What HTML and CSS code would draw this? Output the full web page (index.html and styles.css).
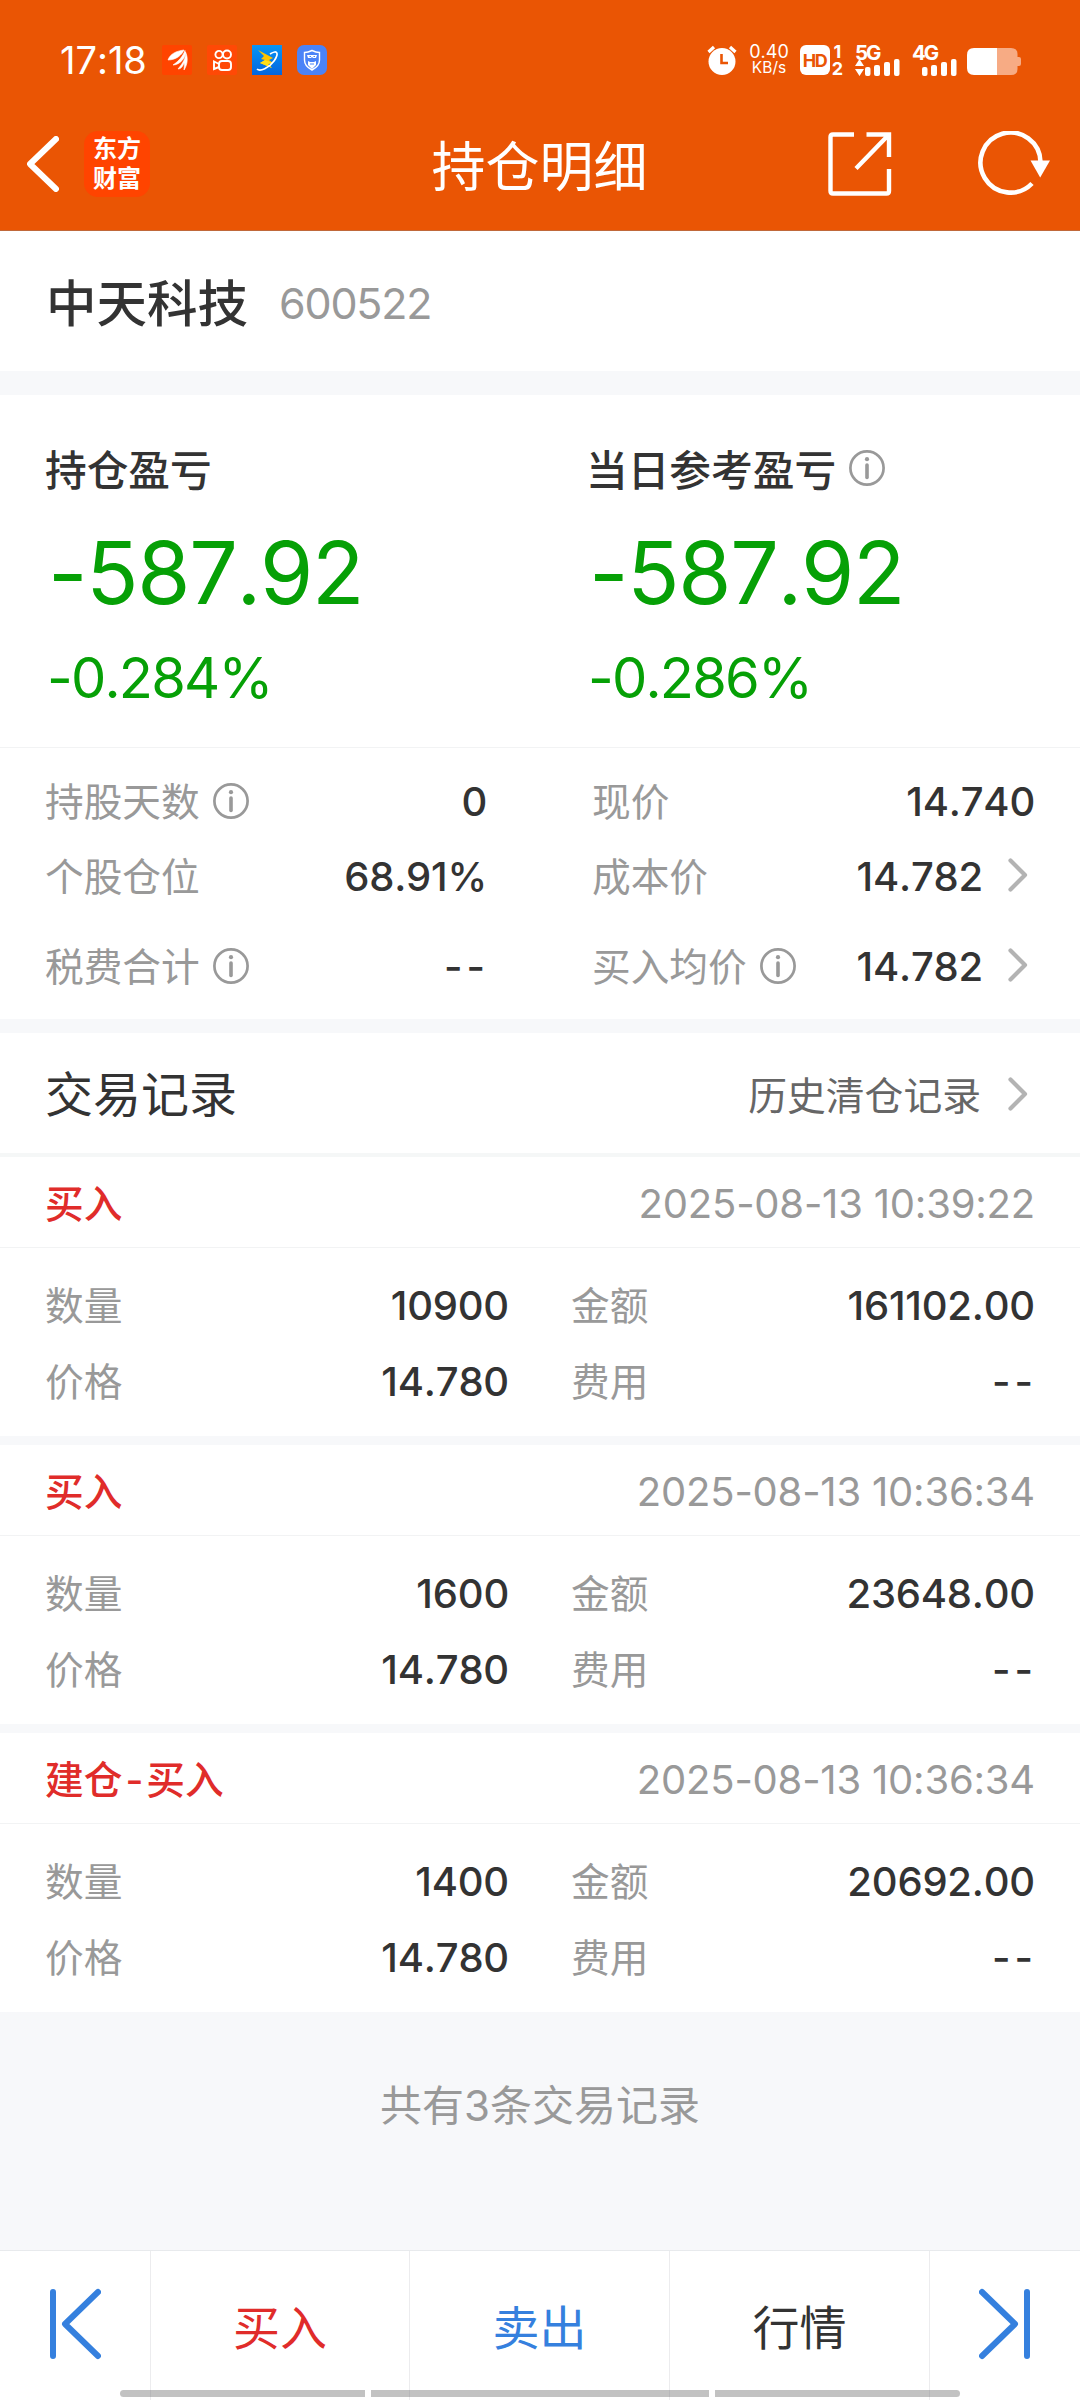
FILE: index.html
```html
<!DOCTYPE html>
<html lang="zh-CN">
<head>
<meta charset="utf-8">
<title>持仓明细</title>
<link rel="stylesheet" href="styles.css">
</head>
<body>
<svg class="defs" width="0" height="0">
  <symbol id="info" viewBox="0 0 36 36"><circle cx="18" cy="18" r="16.6" fill="none" stroke="currentColor" stroke-width="2.700"/><circle cx="18" cy="9.2" r="2.1" fill="currentColor"/><path d="M18 15V27.500" stroke="currentColor" stroke-width="3.6" stroke-linecap="round"/></symbol>
  <symbol id="chev" viewBox="0 0 20 34"><path d="M2.500 2.500L17 17L2.500 31.500" fill="none" stroke="currentColor" stroke-width="4.200" stroke-linecap="round" stroke-linejoin="round"/></symbol>
</svg>
<header class="header">
  <div class="status">
    <span class="time">17:18</span>
    <svg class="app" viewBox="0 0 30 30"><rect width="30" height="30" rx="2" fill="#ff4400"/><path d="M6 15C8 9 14 6 22 5C20 10 14 15 6 15ZM11 20C17 16 21 11 23 5.500C25 12 18 20 11 20ZM16 24C21 18 24 13 23.500 7C26 12 26 19 22 25C22 22 23 19 22 18C21 21 19 24 16 24Z" fill="#fff" stroke="#fff" stroke-width=".6"/></svg>
    <svg class="app" viewBox="0 0 30 30"><rect width="30" height="30" rx="2" fill="#ff4906"/><g fill="none" stroke="#fff" stroke-width="1.900"><circle cx="12" cy="9.500" r="3.600"/><circle cx="20" cy="9.500" r="4"/><rect x="12" y="16" width="12" height="9" rx="3"/><path d="M12 19L7 16.500V24L12 22"/></g></svg>
    <svg class="app" viewBox="0 0 30 30"><defs><linearGradient id="sky" x2="0" y2="1"><stop stop-color="#0795f5"/><stop offset="1" stop-color="#0465df"/></linearGradient></defs><rect width="30" height="30" fill="url(#sky)"/><path d="M6 5L21 13L17 15L21 18L16 19L20 23L8 18L13 15L9 14L12 11Z" fill="#ffc400"/><path d="M13 15L21 18L16 19L20 23L8 18Z" fill="#ffdf19"/><path d="M18 9C26 4 27 9 22 16C17 23 8 27 5 24" fill="none" stroke="#fff" stroke-width="1.700"/></svg>
    <svg class="app" viewBox="0 0 30 30"><rect width="30" height="30" rx="7" fill="#4b83f7"/><path d="M15 5.500C18 7 20 7.500 22.500 7.500V15C22.500 20 19 23 15 25C11 23 7.500 20 7.500 15V7.500C10 7.500 12 7 15 5.500Z" fill="none" stroke="#fff" stroke-width="1.400"/><path d="M10 10H20L19 13H16L15 12L14 13H11ZM11 16L13 17H17L19 16V20L15 24L11 20Z" fill="#fff"/><path d="M12.500 11.500H14M16.500 11.500H18M13 19H17" stroke="#4b83f7"/></svg>
    <div class="sysicons">
      <svg class="alarm" viewBox="0 0 30 30"><circle cx="15" cy="16.500" r="13.500" fill="#fff"/><path d="M1.500 7L7 2M28.500 7L23 2" stroke="#fff" stroke-width="3.200"/><path d="M14.500 9V18H21" fill="none" stroke="#ea5504" stroke-width="2.600"/></svg>
      <div class="speed"><span class="speed-n">0.40</span><span class="speed-u">KB/s</span></div>
      <div class="hd">HD</div>
      <div class="sims"><span>1</span><span>2</span></div>
      <div class="net net5"><span>5G</span><svg viewBox="0 0 45 17"><path d="M0 7L4.500 0L9 7ZM0 10L4.500 17L9 10Z" fill="#fff"/><g fill="#fff"><rect x="10" y="8" width="5.500" height="9" rx="2"/><rect x="19" y="6" width="6" height="11" rx="2"/><rect x="29" y="3" width="6" height="14" rx="2"/><rect x="39" y="0" width="5.500" height="17" rx="2"/></g></svg></div>
      <div class="net net4"><span>4G</span><svg viewBox="0 0 45 17"><g fill="#fff"><rect x="10" y="8" width="5.500" height="9" rx="2"/><rect x="19" y="6" width="6" height="11" rx="2"/><rect x="29" y="3" width="6" height="14" rx="2"/><rect x="39" y="0" width="5.500" height="17" rx="2"/></g></svg></div>
      <svg class="battery" viewBox="0 0 54 27"><path d="M30 0H44Q50.500 0 50.500 6V9H52Q54 9 54 11V16Q54 18 52 18H50.500V21Q50.500 27 44 27H30Z" fill="#f7ab84"/><path d="M30 0H7Q0 0 0 7V20Q0 27 7 27H30Z" fill="#fff"/></svg>
    </div>
  </div>
  <nav class="nav">
    <div class="nav-left">
      <svg class="back" viewBox="0 0 32 56"><path d="M29 3L3 28L29 53" fill="none" stroke="#fff" stroke-width="6" stroke-linecap="round" stroke-linejoin="round"/></svg>
      <div class="brand">东方<br>财富</div>
    </div>
    <h1 class="title">持仓明细</h1>
    <div class="nav-right">
      <svg class="share" viewBox="0 0 64 64"><path d="M26 2.500H5Q2.500 2.500 2.500 5V59Q2.500 61.500 5 61.500H58.500Q61 61.500 61 59V37M38.500 2.500H61V25M61 2.500L28 36.500" fill="none" stroke="#fff" stroke-width="4.400"/></svg>
      <svg class="reload" viewBox="0 0 72 66"><path d="M53 52.500A30 30 0 1 1 61.500 31" fill="none" stroke="#fff" stroke-width="4.600"/><path d="M51.500 29.500H71L61.200 46.500Z" fill="#fff"/></svg>
    </div>
  </nav>
</header>
<main class="content">
  <section class="stock"><span class="name">中天科技</span><span class="code">600522</span></section>
  <section class="profit">
    <div class="pcol"><div class="plabel">持仓盈亏</div><div class="pbig">-587.92</div><div class="ppct">-0.284%</div></div>
    <div class="pcol"><div class="plabel">当日参考盈亏<svg class="info"><use href="#info"/></svg></div><div class="pbig">-587.92</div><div class="ppct">-0.286%</div></div>
  </section>
  <section class="stats">
    <div class="scol">
      <div class="row"><span class="label">持股天数</span><svg class="info"><use href="#info"/></svg><span class="val">0</span></div>
      <div class="row"><span class="label">个股仓位</span><span class="val">68.91%</span></div>
      <div class="row last"><span class="label">税费合计</span><svg class="info"><use href="#info"/></svg><span class="val none">--</span></div>
    </div>
    <div class="scol right">
      <div class="row"><span class="label">现价</span><span class="val">14.740</span></div>
      <div class="row"><span class="label">成本价</span><span class="val">14.782</span><svg class="chev"><use href="#chev"/></svg></div>
      <div class="row last"><span class="label">买入均价</span><svg class="info"><use href="#info"/></svg><span class="val">14.782</span><svg class="chev"><use href="#chev"/></svg></div>
    </div>
  </section>
  <section class="rechead"><h2>交易记录</h2><a class="history">历史清仓记录</a><svg class="chev"><use href="#chev"/></svg></section>
  <section class="records">
    <article class="record">
      <div class="rtop"><span class="side">买入</span><span class="date">2025-08-13 10:39:22</span></div>
      <div class="rbody">
        <div class="cell"><span class="label">数量</span><span class="val">10900</span></div><div class="cell"><span class="label">金额</span><span class="val">161102.00</span></div>
        <div class="cell"><span class="label">价格</span><span class="val">14.780</span></div><div class="cell"><span class="label">费用</span><span class="val none">--</span></div>
      </div>
    </article>
    <article class="record">
      <div class="rtop"><span class="side">买入</span><span class="date">2025-08-13 10:36:34</span></div>
      <div class="rbody">
        <div class="cell"><span class="label">数量</span><span class="val">1600</span></div><div class="cell"><span class="label">金额</span><span class="val">23648.00</span></div>
        <div class="cell"><span class="label">价格</span><span class="val">14.780</span></div><div class="cell"><span class="label">费用</span><span class="val none">--</span></div>
      </div>
    </article>
    <article class="record">
      <div class="rtop"><span class="side">建仓<span class="dash">-</span>买入</span><span class="date">2025-08-13 10:36:34</span></div>
      <div class="rbody">
        <div class="cell"><span class="label">数量</span><span class="val">1400</span></div><div class="cell"><span class="label">金额</span><span class="val">20692.00</span></div>
        <div class="cell"><span class="label">价格</span><span class="val">14.780</span></div><div class="cell"><span class="label">费用</span><span class="val none">--</span></div>
      </div>
    </article>
  </section>
  <p class="total">共有3条交易记录</p>
</main>
<footer class="tabbar">
  <a class="tab"><svg class="skip" viewBox="0 0 52 72"><path d="M4 4V68M49 4L16 36L49 68" fill="none" stroke="#3580de" stroke-width="6" stroke-linecap="round" stroke-linejoin="round"/></svg></a>
  <a class="tab buy">买入</a>
  <a class="tab sell">卖出</a>
  <a class="tab">行情</a>
  <a class="tab"><svg class="skip" viewBox="0 0 52 72"><path d="M48 4V68M3 4L36 36L3 68" fill="none" stroke="#3580de" stroke-width="6" stroke-linecap="round" stroke-linejoin="round"/></svg></a>
  <div class="gesture"><i></i><i></i><i></i></div>
</footer>
</body>
</html>
```
FILE: styles.css
```css
* { box-sizing: border-box; }
body { margin: 0; width: 1080px; height: 2400px; display: flex; flex-direction: column; background: #f7f8fa; color: #333; font-family: Inter, "Noto Sans CJK SC", sans-serif; font-kerning: none; font-feature-settings: "calt" 0; overflow: hidden; }
h1, h2, p { margin: 0; font-weight: 400; }
svg { display: block; flex: none; }
.defs { position: absolute; }

.header { height: 231px; background: #ea5504; color: #fff; border-bottom: 1px solid #c0683a; flex: none; }
.status { height: 90px; padding: 30px 59px 0 60px; display: flex; align-items: center; }
.time { font-size: 38px; width: 102px; letter-spacing: 0; line-height: 60px; white-space: nowrap; }
.app { width: 30px; height: 30px; margin-right: 15px; }
.sysicons { margin-left: auto; display: flex; align-items: center; height: 30px; }
.alarm { width: 30px; height: 30px; margin-right: 12px; }
.speed { width: 40px; display: flex; flex-direction: column; align-items: center; line-height: 16px; margin-right: 11px; }
.speed-n { font-size: 18px; }
.speed-u { font-size: 15.500px; }
.hd { width: 30px; height: 30px; border-radius: 6px; background: #fff; color: #ea5504; font-size: 18px; font-weight: 700; line-height: 31px; text-align: center; letter-spacing: -1.500px; text-indent: -1px; }
.sims { width: 13px; margin: 0 11px 0 1px; display: flex; flex-direction: column; align-items: center; font-size: 18px; font-weight: 700; line-height: 17px; }
.net { width: 45px; font-size: 20.500px; font-weight: 700; line-height: 15px; letter-spacing: -2px; }
.net span { display: block; height: 14px; }
.net svg { width: 45px; height: 17px; }
.net5 { margin-right: 12px; }
.net4 { margin-right: 10px; }
.battery { width: 54px; height: 27px; margin-top: 3px; }
.nav { display: grid; grid-template-columns: 1fr auto 1fr; align-items: center; height: 140px; padding: 7px 28px 0 27px; }
.nav-left, .nav-right { display: flex; align-items: center; }
.nav-right { justify-content: flex-end; }
.back { width: 32px; height: 56px; margin-right: 25px; }
.brand { width: 66px; height: 66px; border-radius: 14px; background: #ff4400; text-align: center; font: 700 24px/30px "Noto Sans CJK SC", sans-serif; padding-top: 1px; }
.title { font: 400 54px/70px "Noto Sans CJK SC", sans-serif; }
.share { width: 64px; height: 64px; margin-right: 86px; }
.reload { width: 74px; height: 66px; }

.content { flex: 1; }
.stock { height: 140px; padding: 0 46px; background: #fff; display: flex; align-items: center; }
.name { font: 500 50.500px/64px "Noto Sans CJK SC", sans-serif; padding-bottom: 3px; }
.code { margin-left: 31px; font-size: 43px; letter-spacing: -1.200px; color: #999; padding-top: 4px; }
.profit { margin-top: 24px; height: 352px; background: #fff; display: grid; grid-template-columns: 541px 1fr; padding: 45px 0 0 45px; }
.plabel { display: flex; align-items: center; font: 500 41.700px/56px "Noto Sans CJK SC", sans-serif; }
.info { width: 36px; height: 36px; color: #999; }
.plabel .info { margin: 0 0 1px 13px; }
.pbig { font-size: 86px; line-height: 100px; margin: 27px 0 0 3px; color: #06a006; letter-spacing: -1.300px; }
.ppct { font-size: 56px; line-height: 70px; margin: 20px 0 0 2px; color: #06a006; letter-spacing: -1.800px; }
.stats { height: 272px; background: #fff; border-top: 1px solid #f2f3f4; display: grid; grid-template-columns: 441px 442px; column-gap: 106px; padding: 16px 0 0 45px; }
.row, .cell { display: flex; align-items: center; height: 75px; }
.row.last { margin-top: 15px; }
.label { font: 400 38.700px/56px "Noto Sans CJK SC", sans-serif; color: #999; padding-bottom: 5px; }
.row .info { margin: 0 0 2px 13px; }
.val { margin-left: auto; margin-right: -1px; font-size: 40px; font-weight: 500; letter-spacing: -.2px; }
.val.none { letter-spacing: 4px; margin-right: -3px; }
.chev { width: 20px; height: 34px; margin-left: 26px; margin-right: 6px; color: #b3b3b3; }
.row .chev { margin-bottom: 3px; }
.rechead { margin-top: 14px; height: 124px; background: #fff; border-bottom: 4px solid #f5f7f7; display: flex; align-items: center; padding: 0 46px 0 45px; }
.rechead .chev { margin-top: 2px; }
h2 { font: 400 48px/64px "Noto Sans CJK SC", sans-serif; flex: 1; padding-bottom: 5px; }
.history { font: 400 38.800px/56px "Noto Sans CJK SC", sans-serif; color: #666; margin-right: 1px; }
.records { display: flex; flex-direction: column; gap: 9px; }
.record { height: 279px; background: #fff; }
.rtop { height: 91px; border-bottom: 1px solid #f2f3f4; padding: 0 45px; display: flex; align-items: center; justify-content: space-between; }
.side { font: 500 38.700px/56px Inter, "Noto Sans CJK SC", sans-serif; color: #e02c2a; padding-top: 3px; }
.dash { margin: 0 3px; }
.date { font-size: 40px; letter-spacing: -.2px; color: #999; padding-top: 3px; }
.rbody { display: grid; grid-template-columns: 463px 463px; column-gap: 63px; padding: 19px 46px 0 45px; }
.cell { height: 76px; }
.total { font: 400 42px/60px Inter, "Noto Sans CJK SC", sans-serif; color: #999; text-align: center; padding-top: 64px; }

.tabbar { height: 150px; flex: none; position: relative; background: #fff; border-top: 1px solid #e8eaed; display: grid; grid-template-columns: 151px 259px 260px 260px 150px; }
.tab { display: flex; align-items: center; justify-content: center; font: 400 47px/64px "Noto Sans CJK SC", sans-serif; border-right: 1px solid #ececee; padding-bottom: 2px; }
.tab:nth-child(5) { border-right: 0; }
.buy { color: #e02c2a; }
.sell { color: #3580de; }
.skip { width: 52px; height: 72px; margin-bottom: 2px; }
.gesture { position: absolute; left: 120px; bottom: 3px; display: flex; gap: 6px; }
.gesture i { width: 245px; height: 7px; background: rgba(120,120,120,.45); }
.gesture i:nth-child(2) { width: 338px; }
.gesture i:first-child { border-radius: 4px 0 0 4px; }
.gesture i:last-child { border-radius: 0 4px 4px 0; }
```
